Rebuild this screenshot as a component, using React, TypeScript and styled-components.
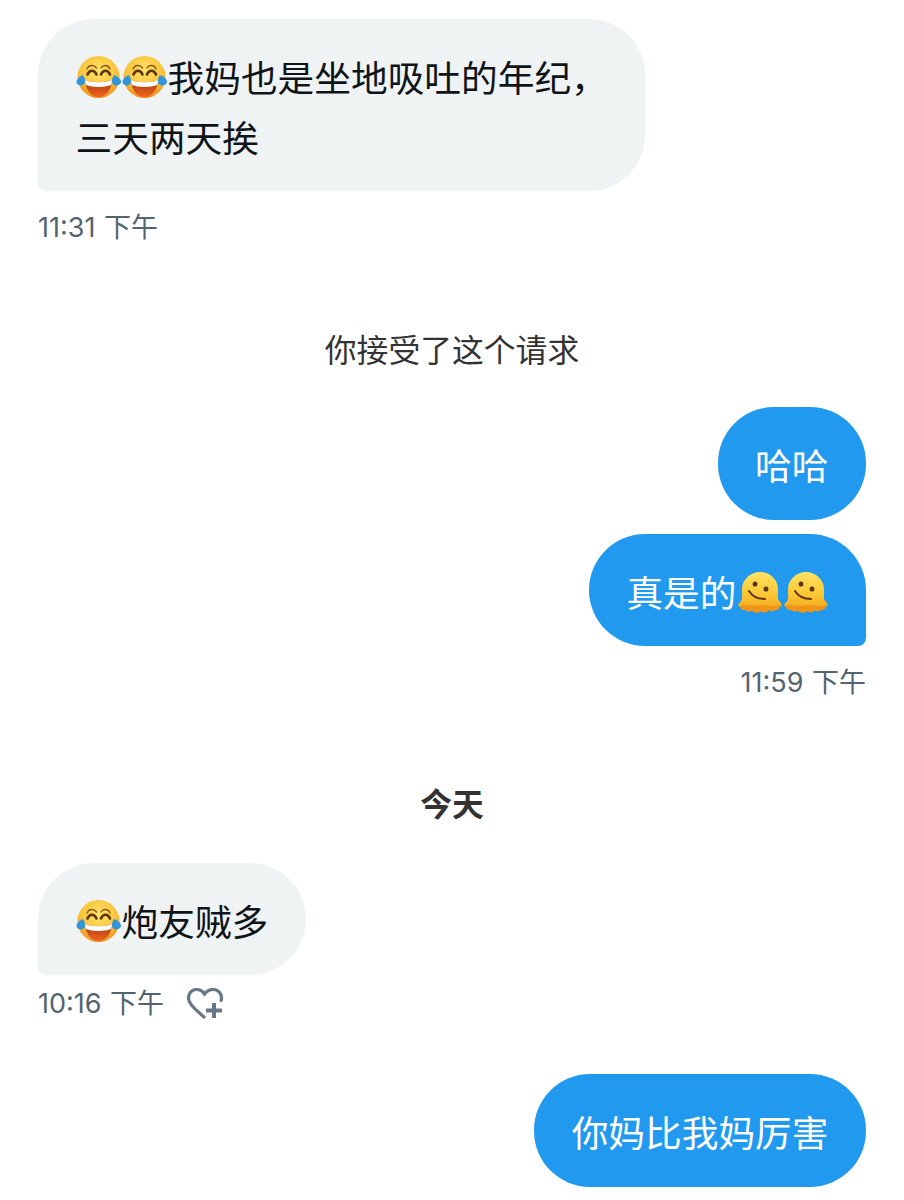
import React from 'react';
import styled, { createGlobalStyle } from 'styled-components';

const GlobalStyle = createGlobalStyle`
  html, body {
    background-color: #fff;
    margin: 0;
    padding: 0;
  }

  body {
    font-family: "Noto Sans", "Noto Sans CJK SC", sans-serif;
  }
`;

const Thread = styled.main`
  display: flex;
  flex-direction: column;
  height: 1200px;
  overflow: hidden;
  padding: 19px 38px 0;
  box-sizing: border-box;
`;

const Row = styled.div<{ $mine?: boolean; $gap?: number }>`
  display: flex;
  justify-content: ${(p) => (p.$mine ? 'flex-end' : 'flex-start')};
  margin-top: ${(p) => p.$gap ?? 0}px;
`;

const Bubble = styled.div<{ $mine?: boolean; $tail?: boolean }>`
  background-color: ${(p) => (p.$mine ? '#2199ee' : '#eff3f4')};
  border-radius: 56px;
  ${(p) => p.$tail && (p.$mine ? 'border-bottom-right-radius: 8px;' : 'border-bottom-left-radius: 8px;')}
  box-sizing: border-box;
  color: ${(p) => (p.$mine ? '#fff' : '#0f1419')};
  font-family: "Noto Sans CJK SC", sans-serif;
  font-size: 36.7px;
  line-height: 60px;
  padding: 27px 37.5px ${(p) => (p.$tail ? 25 : 26)}px;
`;

const Line = styled.div`
  align-items: center;
  display: flex;
  height: 60px;
  white-space: nowrap;
`;

const Emoji = styled.svg`
  display: block;
  flex: none;
  height: 46px;
  width: 46px;
`;

const Meta = styled.div<{ $mine?: boolean; $gap?: number }>`
  align-items: center;
  color: #536471;
  display: flex;
  font-family: "Inter", "Noto Sans CJK SC", sans-serif;
  font-size: 27px;
  height: 36px;
  justify-content: ${(p) => (p.$mine ? 'flex-end' : 'flex-start')};
  line-height: 36px;
  margin-top: ${(p) => p.$gap ?? 0}px;
  word-spacing: 1px;
`;

const Notice = styled.div<{ $bold?: boolean; $gap: number }>`
  color: #333;
  font-family: "Noto Sans CJK SC", sans-serif;
  font-size: 31.8px;
  font-weight: ${(p) => (p.$bold ? 700 : 400)};
  height: 44px;
  line-height: 44px;
  margin-top: ${(p) => p.$gap}px;
  text-align: center;
`;

const HeartIcon = styled.svg`
  display: block;
  flex: none;
  height: 32px;
  margin-left: 23px;
  width: 37px;
`;

const JoyEmoji: React.FC = () => (
  <Emoji viewBox="0 -1 46 46">
    <defs>
      <radialGradient id="joyFace" cx="50%" cy="35%" r="65%">
        <stop offset="0" stopColor="#fde36a" />
        <stop offset="0.65" stopColor="#fbc43a" />
        <stop offset="1" stopColor="#ee8f1e" />
      </radialGradient>
      <linearGradient id="joyMouth" x1="0" y1="0" x2="0" y2="1">
        <stop offset="0" stopColor="#a83a12" />
        <stop offset="1" stopColor="#f0641c" />
      </linearGradient>
    </defs>
    <circle cx="22.5" cy="23" r="21" fill="url(#joyFace)" />
    <path d="M9 26 C15 29 30 29 36 26 C35.5 36 30 43 22.5 43 C15 43 9.5 36 9 26 Z" fill="url(#joyMouth)" />
    <path d="M9 26 C15 29 30 29 36 26 C36 28 35.5 30 35 31 C29 33.5 16 33.5 10 31 C9.5 30 9 28 9 26 Z" fill="#fff" />
    <path d="M11 15 C13 10.5 18 10.5 20.5 14" fill="none" stroke="#8a5a1c" strokeWidth="1.4" strokeLinecap="round" />
    <path d="M11.5 20.5 C13.5 15.5 18.5 15.5 20.5 20.5" fill="none" stroke="#5e3512" strokeWidth="2.6" strokeLinecap="round" />
    <path d="M25 14 C27 10.5 32 10.5 34 15" fill="none" stroke="#8a5a1c" strokeWidth="1.4" strokeLinecap="round" />
    <path d="M25 20.5 C27 15.5 32 15.5 34 20.5" fill="none" stroke="#5e3512" strokeWidth="2.6" strokeLinecap="round" />
    <path d="M7 21 C9.5 25 10 29 7 31 C3.5 32.5 0 30 0.5 27 C1.5 24 4 22 7 21 Z" fill="#3095dd" />
    <path d="M38 21 C35.5 25 35 29 38 31 C41.5 32.5 45.5 30 45 27 C44 24 41 22 38 21 Z" fill="#3095dd" />
  </Emoji>
);

const MeltingEmoji: React.FC = () => (
  <Emoji viewBox="0 -2 46 46">
    <defs>
      <linearGradient id="meltFace" x1="0" y1="0" x2="0" y2="1">
        <stop offset="0" stopColor="#fee264" />
        <stop offset="0.55" stopColor="#fdc733" />
        <stop offset="1" stopColor="#f2a01c" />
      </linearGradient>
    </defs>
    <path
      d="M23 2 C33 2 41 10 41 19 C41 24 40.5 28 41.5 30 C42.5 32 45 33 44.5 35.5 C44 37 42 37 41.5 37.5 C42.5 39.5 40 40.5 38 39.5 C37 41.5 34 42 32 40 C29.5 43 26 42.5 24 41 C21 43.5 17 43 15 40.5 C12.5 42 9 41.5 8 39.5 C5.5 40.5 3 39 4 37 C2 37 0.5 35.5 1.5 34 C2.5 32.5 4 32 4.5 30 C5.5 28 5 24 5 19 C5 10 13 2 23 2 Z"
      fill="url(#meltFace)"
    />
    <path d="M3 36 C9 33.5 15 37 22 35.5 C28 34 36 37.5 43 35 C43.5 37 42 37 41.5 37.5 C42.5 39.5 40 40.5 38 39.5 C37 41.5 34 42 32 40 C29.5 43 26 42.5 24 41 C21 43.5 17 43 15 40.5 C12.5 42 9 41.5 8 39.5 C5.5 40.5 3 39 3 36 Z" fill="#ee9418" />
    <ellipse cx="18" cy="14" rx="2.4" ry="2.6" fill="#5b3413" />
    <ellipse cx="29" cy="19" rx="2.4" ry="2.6" fill="#5b3413" />
    <path d="M12 21 C15 26 21 29 28 29" fill="none" stroke="#5b3413" strokeWidth="2" strokeLinecap="round" />
  </Emoji>
);

const AddReaction: React.FC = () => (
  <HeartIcon viewBox="0 0 37 32" fill="none" stroke="#667885" strokeWidth="3.2" strokeLinecap="round">
    <path d="M17 29 C8 21 1.5 16 1.5 10 C1.5 5 5 1.5 9.5 1.5 C12.5 1.5 15.5 3 17.5 6 C20 3 23 1.5 26 1.5 C31 1.5 34.5 5 34.5 10 C34.5 11 34.4 11.5 34.2 12.5" />
    <path d="M27 15 V30 M19 22.5 H35" strokeWidth="4" strokeLinecap="butt" />
  </HeartIcon>
);

const App: React.FC = () => (
  <>
    <GlobalStyle />
    <Thread>
      <Row>
        <Bubble $tail>
          <Line>
            <JoyEmoji />
            <JoyEmoji />
            我妈也是坐地吸吐的年纪，
          </Line>
          <Line>三天两天挨</Line>
        </Bubble>
      </Row>
      <Meta $gap={19}>11:31 下午</Meta>
      <Notice $gap={80}>你接受了这个请求</Notice>
      <Row $mine $gap={37}>
        <Bubble $mine>
          <Line>哈哈</Line>
        </Bubble>
      </Row>
      <Row $mine $gap={14}>
        <Bubble $mine $tail>
          <Line>
            真是的
            <MeltingEmoji />
            <MeltingEmoji />
          </Line>
        </Bubble>
      </Row>
      <Meta $mine $gap={19}>11:59 下午</Meta>
      <Notice $bold $gap={79}>今天</Notice>
      <Row $gap={39}>
        <Bubble $tail>
          <Line>
            <JoyEmoji />
            炮友贼多
          </Line>
        </Bubble>
      </Row>
      <Meta $gap={11}>
        10:16 下午
        <AddReaction />
      </Meta>
      <Row $mine $gap={52}>
        <Bubble $mine>
          <Line>你妈比我妈厉害</Line>
        </Bubble>
      </Row>
    </Thread>
  </>
);

export default App;
